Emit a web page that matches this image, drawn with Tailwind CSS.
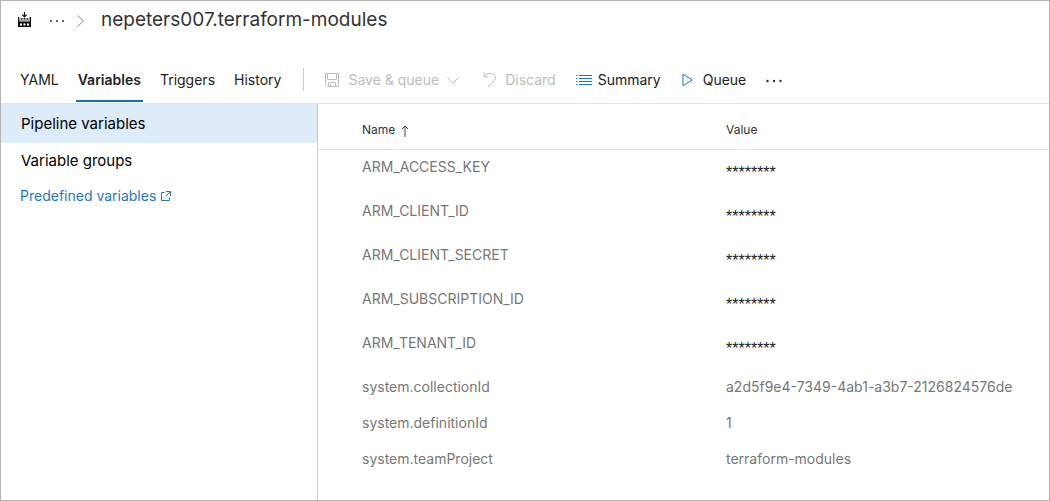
<!DOCTYPE html>
<html lang="en">
<head>
<meta charset="utf-8">
<meta name="viewport" content="width=device-width, initial-scale=1">
<title>nepeters007.terraform-modules</title>
<script src="https://cdn.jsdelivr.net/npm/@tailwindcss/browser@4"></script>
</head>
<body class="flex min-h-screen flex-col border border-[#b3b3b3] bg-white font-['Inter','Liberation_Sans',sans-serif] text-sm text-[#222]">
<header class="flex h-[38px] items-center pl-4">
  <svg class="h-4 w-4" viewBox="0 0 16 16" fill="none" stroke="#111" aria-hidden="true">
    <path d="M7.500 0v4.500M5.300 2.700l2.200 2.200 2.200-2.200" stroke-width="1.200"/>
    <path d="M1 5h1.300v3.500h10.400V5H14v10H1z" fill="#111" stroke="none"/>
    <path d="M3.500 7h2M6.500 7h2M9.500 7h2" stroke-width="1.500"/>
    <path d="M2.300 9h10.400" stroke="#fff" stroke-width=".8"/>
    <path d="M3 11.500h2v2H3zM6.500 11.500h2v2h-2zM10 11.500h2v2h-2z" fill="#fff" stroke="none"/>
  </svg>
  <button class="ml-4 flex h-6 w-4 items-center" aria-label="More breadcrumbs">
    <svg class="h-4 w-4" viewBox="0 0 16 16" fill="#333"><circle cx="2" cy="9" r="1"/><circle cx="8" cy="9" r="1"/><circle cx="14" cy="9" r="1"/></svg>
  </button>
  <svg class="ml-3 h-4 w-2" viewBox="0 0 8 16" fill="none" stroke="#888" aria-hidden="true"><path d="M.5 3.500l6 5.500-6 5.500"/></svg>
  <h1 class="ml-4 text-[19px] text-[#333]">nepeters007.terraform-modules</h1>
</header>
<div class="mt-[17px] flex h-12 items-stretch border-b border-[#e4e4e4] pl-[17px]">
  <nav class="flex gap-[15px]" aria-label="Pipeline">
    <a href="#yaml" class="flex items-center px-[2px]">YAML</a>
    <a href="#variables" aria-current="page" class="mb-px flex items-center border-b-2 border-[#0f6fc0] px-[2px] pt-[3px] font-semibold">Variables</a>
    <a href="#triggers" class="flex items-center px-[2px]">Triggers</a>
    <a href="#history" class="flex items-center px-[2px]">History</a>
  </nav>
  <div class="mx-5 my-3 w-px bg-[#ccc]"></div>
  <div class="flex items-center">
    <button disabled class="flex items-center text-[#bdbdbd]">
      <svg class="mr-2 h-4 w-4" viewBox="0 0 16 16" fill="none" stroke="#bdbdbd" aria-hidden="true"><path d="M1.500 1.500h13v13h-11l-2-2zM3.500 1.500v6h9v-6M4.500 14.500v-4h7v4M6.500 12v2.500"/></svg>
      Save &amp; queue
      <svg class="ml-2 h-4 w-3" viewBox="0 0 12 16" fill="none" stroke="#bdbdbd" aria-hidden="true"><path d="M.5 5.500L6 11l5.500-5.500"/></svg>
    </button>
    <button disabled class="ml-6 flex items-center text-[#bdbdbd]">
      <svg class="mr-1.5 h-4 w-4" viewBox="0 0 16 16" fill="none" stroke="#bdbdbd" aria-hidden="true"><path d="M1 .5V5h4.500M1 5C3.500 2 6.500.5 9.500 1.800c3.500 1.500 3.500 5 1.500 7L5 15"/></svg>
      Discard
    </button>
    <button class="ml-5 flex items-center">
      <svg class="mr-1.5 h-4 w-4" viewBox="0 0 16 16" fill="none" stroke="#1577c9" aria-hidden="true"><path d="M0 3.500h1.500M0 6.500h1.500M0 9.500h1.500M0 12.500h1.500M3 3.500h13M3 6.500h13M3 9.500h13M3 12.500h13"/></svg>
      Summary
    </button>
    <button class="ml-5 flex items-center">
      <svg class="mr-2.5 h-4 w-3" viewBox="0 0 12 16" fill="none" stroke="#1577c9" aria-hidden="true"><path d="M2 2.200v11.600L11 8z"/></svg>
      Queue
    </button>
    <button class="ml-5 flex h-6 items-center" aria-label="More actions">
      <svg class="h-4 w-4" viewBox="0 0 16 16" fill="#333"><circle cx="1.500" cy="9" r="1.200"/><circle cx="8" cy="9" r="1.200"/><circle cx="14.500" cy="9" r="1.200"/></svg>
    </button>
  </div>
</div>
<main class="flex flex-1">
  <aside class="flex w-[317px] shrink-0 flex-col border-r border-[#c8c8c8] text-black">
    <a href="#pipeline-variables" aria-current="true" class="flex h-[39px] items-center bg-[#deebf9] px-5 text-[15px]">Pipeline variables</a>
    <a href="#variable-groups" class="flex h-9 items-center px-5 text-[15px]">Variable groups</a>
    <a href="#predefined" class="flex h-[34px] items-center px-[19px] text-[#1f78c1]">Predefined variables
      <svg class="ml-1 h-3 w-3" viewBox="0 0 12 12" fill="none" stroke="#1f78c1" aria-hidden="true"><path d="M4.500 2.500h-3v8h8v-3M6 1.500h4.500V6M10.500 1.500L6 6"/></svg>
    </a>
  </aside>
  <section class="flex-1">
    <table class="w-full table-fixed text-left">
      <thead class="border-b border-[#e4e4e4] text-xs text-[#333]">
        <tr class="h-[45px]">
          <th scope="col" class="w-[364px] pt-2 pl-11 font-normal"><button class="flex items-center gap-1">Name
            <svg class="h-4 w-3" viewBox="0 0 12 16" fill="none" stroke="#444" aria-hidden="true"><path d="M6 15V4M3 7l3-3 3 3"/></svg></button></th>
          <th scope="col" class="pt-2 pl-11 font-normal">Value</th>
        </tr>
      </thead>
      <tbody class="text-[#777]">
        <tr class="h-11"><td class="pb-2 pl-11">ARM_ACCESS_KEY</td><td class="pt-1 pl-11 font-['Liberation_Sans',sans-serif] text-base text-[#222]">********</td></tr>
        <tr class="h-11"><td class="pb-2 pl-11">ARM_CLIENT_ID</td><td class="pt-1 pl-11 font-['Liberation_Sans',sans-serif] text-base text-[#222]">********</td></tr>
        <tr class="h-11"><td class="pb-2 pl-11">ARM_CLIENT_SECRET</td><td class="pt-1 pl-11 font-['Liberation_Sans',sans-serif] text-base text-[#222]">********</td></tr>
        <tr class="h-11"><td class="pb-2 pl-11">ARM_SUBSCRIPTION_ID</td><td class="pt-1 pl-11 font-['Liberation_Sans',sans-serif] text-base text-[#222]">********</td></tr>
        <tr class="h-11"><td class="pb-2 pl-11">ARM_TENANT_ID</td><td class="pt-1 pl-11 font-['Liberation_Sans',sans-serif] text-base text-[#222]">********</td></tr>
        <tr class="h-9"><td class="pl-11">system.collectionId</td><td class="pl-11">a2d5f9e4-7349-4ab1-a3b7-2126824576de</td></tr>
        <tr class="h-9"><td class="pl-11">system.definitionId</td><td class="pl-11">1</td></tr>
        <tr class="h-9"><td class="pl-11">system.teamProject</td><td class="pl-11">terraform-modules</td></tr>
      </tbody>
    </table>
  </section>
</main>
</body>
</html>
